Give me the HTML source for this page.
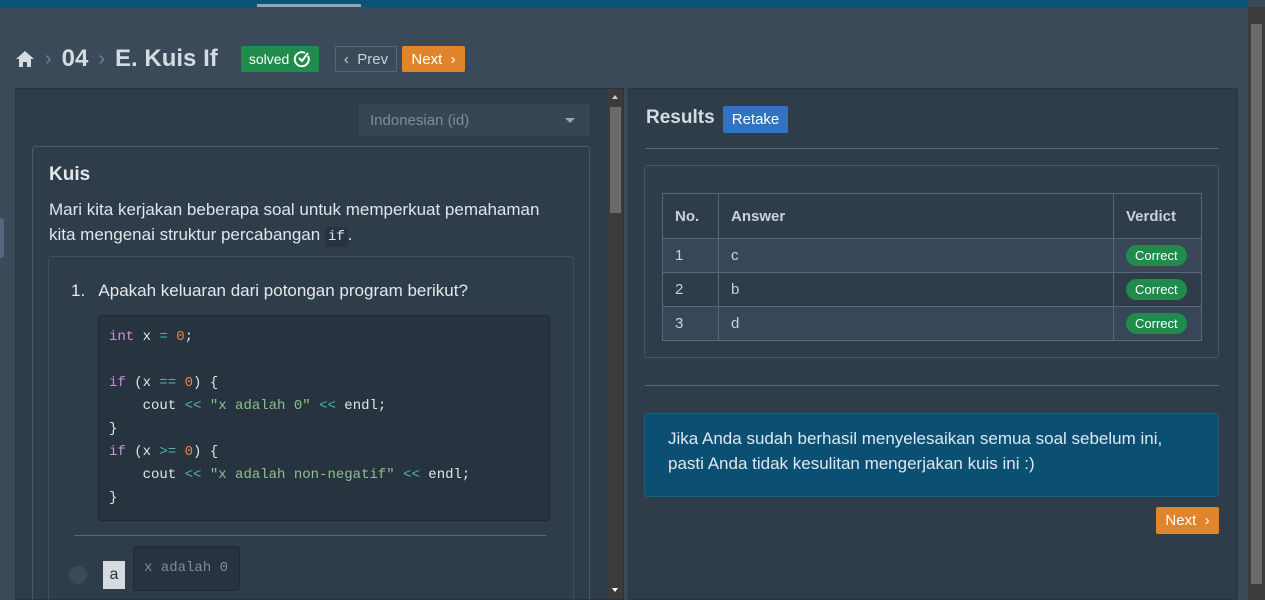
<!DOCTYPE html>
<html style="overflow:hidden;height:600px"><head><meta charset="utf-8"><style>
*{box-sizing:border-box;margin:0;padding:0}
body{width:1265px;height:600px;overflow:hidden;background:#3a4a58;font-family:"Liberation Sans",sans-serif;color:#e3e8ec;position:relative}
.top{position:absolute;left:0;top:0;width:1248px;height:7px;background:#0c5378}
.tab{position:absolute;left:257px;top:4px;width:104px;height:3px;background:#8fa3b3}
.sb{position:absolute;right:0;top:7px;width:17px;height:593px;background:#3b3b3b}
.sb .th{position:absolute;left:3px;top:17px;width:11px;height:560px;background:#6b6b6b}
.crumb{position:absolute;top:44px;left:15px;height:30px;display:flex;align-items:center;font-weight:bold;color:#d4dbe1}
.btn{position:absolute;height:26px;border-radius:2px;font-size:15px;display:flex;align-items:center;justify-content:center}
.panel{position:absolute;background:#2f3d4a;border:1px solid #283540;overflow:hidden}
.mono{font-family:"Liberation Mono",monospace}
table{border-collapse:collapse;font-size:15px}
td,th{border:1px solid #56687a;text-align:left;padding:0 12px;color:#c9d2da}
th{height:45px;font-weight:bold}
td{height:34px}
.ok{background:#1f8b4c;color:#fff;border-radius:12px;font-size:13px;padding:3px 9px}
</style></head><body>
<div class="top"></div><div class="tab"></div>
<div class="sb"><div class="th"></div></div>
<div style="position:absolute;left:0;top:218px;width:4px;height:40px;background:#55677a;border-radius:0 3px 3px 0"></div>
<div class="crumb">
<svg width="20" height="18" viewBox="0 0 20 18"><path d="M10 1L1 9h3v8h4v-5h4v5h4V9h3z" fill="#d4dbe1"/></svg>
<span style="color:#6f8292;margin:0 10px;font-weight:normal;font-size:20px">›</span>
<span style="font-size:24px">04</span>
<span style="color:#6f8292;margin:0 10px;font-weight:normal;font-size:20px">›</span>
<span style="font-size:24px">E. Kuis If</span></div>
<div class="btn" style="left:241px;top:46px;width:78px;background:#1f8b4c;color:#fff;font-size:14px">solved&nbsp;<svg width="18" height="18" viewBox="0 0 18 18"><path d="M15 6A7 7 0 1 1 12 3" fill="none" stroke="#fff" stroke-width="2"/><path d="M6 8l3 3 6-8" fill="none" stroke="#fff" stroke-width="2"/></svg></div>
<div class="btn" style="left:335px;top:46px;width:62px;border:1px solid #55677a;color:#c9d2da">‹&nbsp; Prev</div>
<div class="btn" style="left:402px;top:46px;width:63px;background:#e0852c;color:#fff">Next&nbsp; ›</div>

<div class="panel" style="left:15px;top:88px;width:609px;height:512px">
<div style="position:absolute;left:591px;top:0;width:17px;height:512px;background:#3b3b3b"><div style="position:absolute;left:3px;top:18px;width:11px;height:106px;background:#6b6b6b"></div><div style="position:absolute;left:5px;top:6px;border:3px solid transparent;border-bottom:4px solid #ccc;border-top:0"></div><div style="position:absolute;left:5px;top:499px;border:3px solid transparent;border-top:4px solid #fff;border-bottom:0"></div></div>
<div style="position:absolute;left:343px;top:15px;width:231px;height:32px;background:#364655;color:#7d8d9b;font-size:15px;padding:8px 11px">Indonesian (id)<span style="position:absolute;right:15px;top:14px;border:5px solid transparent;border-top:5px solid #9aa8b4;border-bottom:0"></span></div>
<div style="position:absolute;left:16px;top:57px;width:558px;height:470px;border:1px solid #4a5b6b;border-radius:3px">
<div style="position:absolute;left:16px;top:17px;font-size:19px;font-weight:bold">Kuis</div>
<div style="position:absolute;left:16px;top:50px;width:515px;font-size:17px;line-height:25px;color:#dfe5ea">Mari kita kerjakan beberapa soal untuk memperkuat pemahaman kita mengenai struktur percabangan <span class="mono" style="background:#27333e;font-size:14px;padding:2px 3px;border-radius:3px">if</span>.</div>
<div style="position:absolute;left:15px;top:109px;width:526px;height:360px;border:1px solid #3f4f5e;border-radius:3px;background:#2f3d4a">
<div style="position:absolute;left:22px;top:24px;font-size:17px">1.&nbsp;&nbsp; Apakah keluaran dari potongan program berikut?</div>
<div class="mono" style="position:absolute;left:49px;top:58px;width:452px;height:206px;background:#27333e;border:1px solid #1f2a33;border-radius:3px;padding:10px 10px;font-size:14px;line-height:23px;white-space:pre;color:#dfe5ea"><span style="color:#c78fd6">int</span> x <span style="color:#4fb3b3">=</span> <span style="color:#e8864a">0</span>;

<span style="color:#c78fd6">if</span> (x <span style="color:#4fb3b3">==</span> <span style="color:#e8864a">0</span>) {
    cout <span style="color:#4fb3b3">&lt;&lt;</span> <span style="color:#8cc08c">"x adalah 0"</span> <span style="color:#4fb3b3">&lt;&lt;</span> endl;
}
<span style="color:#c78fd6">if</span> (x <span style="color:#4fb3b3">&gt;=</span> <span style="color:#e8864a">0</span>) {
    cout <span style="color:#4fb3b3">&lt;&lt;</span> <span style="color:#8cc08c">"x adalah non-negatif"</span> <span style="color:#4fb3b3">&lt;&lt;</span> endl;
}</div>
<div style="position:absolute;left:25px;top:278px;width:472px;height:1px;background:#55677a"></div>
<div style="position:absolute;left:20px;top:309px;width:18px;height:18px;border-radius:50%;background:#3a4a58"></div>
<div style="position:absolute;left:54px;top:304px;width:22px;height:28px;background:#d6dbe0;color:#333;font-size:16px;text-align:center;line-height:28px">a</div>
<div class="mono" style="position:absolute;left:84px;top:289px;width:107px;height:45px;background:#27333e;border:1px solid #1f2a33;border-radius:3px;color:#7d8d9b;font-size:14px;padding:13px 10px">x adalah 0</div>
</div></div></div>

<div class="panel" style="left:628px;top:88px;width:610px;height:512px">
<div style="position:absolute;left:17px;top:18px;font-size:19px;font-weight:bold;color:#d4dbe1">Results</div>
<div class="btn" style="left:94px;top:17px;width:65px;height:27px;background:#2f73c1;color:#fff">Retake</div>
<div style="position:absolute;left:16px;top:59px;width:574px;height:1px;background:#55677a"></div>
<div style="position:absolute;left:15px;top:76px;width:575px;height:193px;border:1px solid #44566a;border-radius:3px">
<table style="position:absolute;left:17px;top:27px;width:540px">
<tr><th style="width:56px">No.</th><th>Answer</th><th style="width:88px">Verdict</th></tr>
<tr style="background:#384757"><td>1</td><td>c</td><td><span class="ok">Correct</span></td></tr>
<tr><td>2</td><td>b</td><td><span class="ok">Correct</span></td></tr>
<tr style="background:#384757"><td>3</td><td>d</td><td><span class="ok">Correct</span></td></tr>
</table></div>
<div style="position:absolute;left:16px;top:296px;width:574px;height:1px;background:#55677a"></div>
<div style="position:absolute;left:15px;top:324px;width:575px;height:84px;background:#0b4f72;border:1px solid #1b5e80;border-radius:3px;padding:12px 23px;font-size:17px;line-height:25px;color:#dfe8ef">Jika Anda sudah berhasil menyelesaikan semua soal sebelum ini, pasti Anda tidak kesulitan mengerjakan kuis ini :)</div>
<div class="btn" style="left:527px;top:418px;width:63px;height:27px;background:#e0852c;color:#fff">Next&nbsp; ›</div>
</div>
</body></html>
